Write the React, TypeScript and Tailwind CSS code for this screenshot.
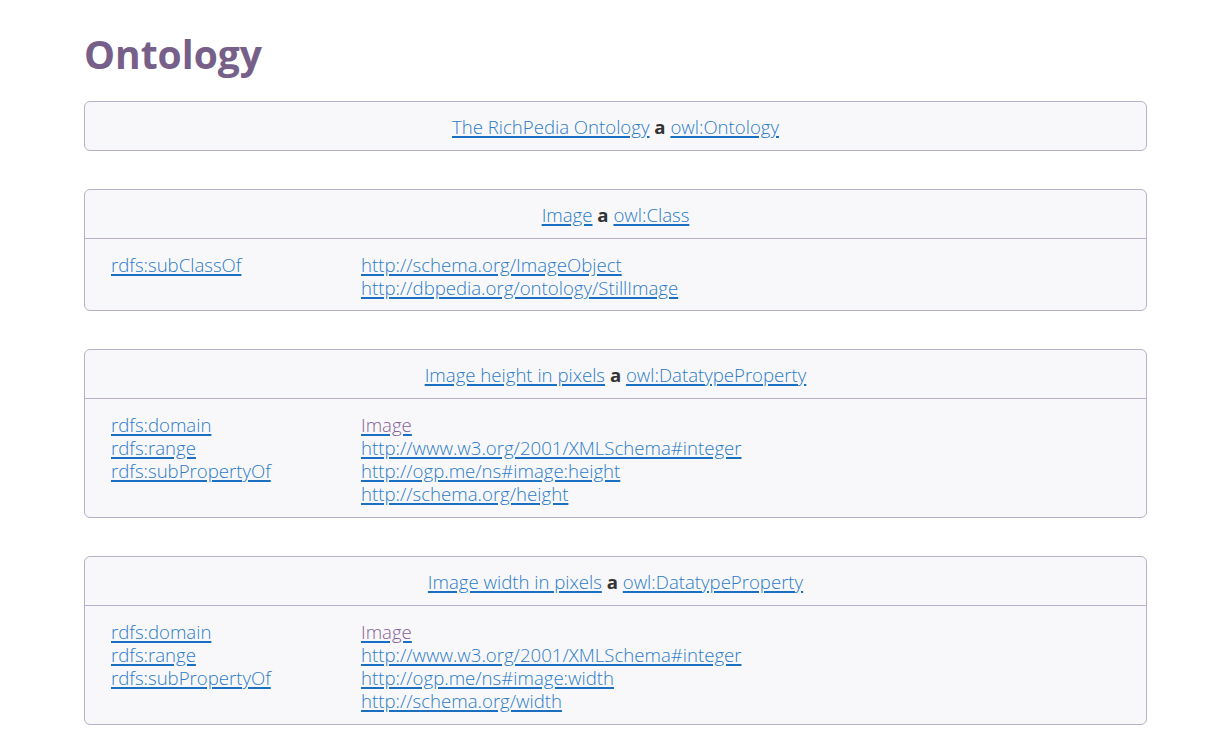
import React from "react";

type Card = { subject: string; type: string; rows: { label: string; values: { text: string; visited?: boolean }[] }[] };

const cards: Card[] = [
  { subject: "The RichPedia Ontology", type: "owl:Ontology", rows: [] },
  {
    subject: "Image",
    type: "owl:Class",
    rows: [
      {
        label: "rdfs:subClassOf",
        values: [{ text: "http://schema.org/ImageObject" }, { text: "http://dbpedia.org/ontology/StillImage" }],
      },
    ],
  },
  {
    subject: "Image height in pixels",
    type: "owl:DatatypeProperty",
    rows: [
      { label: "rdfs:domain", values: [{ text: "Image", visited: true }] },
      { label: "rdfs:range", values: [{ text: "http://www.w3.org/2001/XMLSchema#integer" }] },
      {
        label: "rdfs:subPropertyOf",
        values: [{ text: "http://ogp.me/ns#image:height" }, { text: "http://schema.org/height" }],
      },
    ],
  },
  {
    subject: "Image width in pixels",
    type: "owl:DatatypeProperty",
    rows: [
      { label: "rdfs:domain", values: [{ text: "Image", visited: true }] },
      { label: "rdfs:range", values: [{ text: "http://www.w3.org/2001/XMLSchema#integer" }] },
      {
        label: "rdfs:subPropertyOf",
        values: [{ text: "http://ogp.me/ns#image:width" }, { text: "http://schema.org/width" }],
      },
    ],
  },
];

function A({ children, visited }: { children: React.ReactNode; visited?: boolean }) {
  return (
    <a
      href="#"
      className={
        visited
          ? "text-[#85609a] underline decoration-[#1a6fc0] decoration-2 underline-offset-[2px]"
          : "text-[#2b7bc8] underline decoration-[#1a6fc0] decoration-2 underline-offset-[2px]"
      }
    >
      {children}
    </a>
  );
}

export default function App() {
  return (
    <div className="min-h-screen bg-white px-[84px] pt-[29px] pb-4 font-['Open_Sans',sans-serif] font-light text-[18.6px] leading-[23px]">
      <h1 className="text-[39px] leading-[50px] font-bold text-[#76608a] mb-[22px]">Ontology</h1>
      <div className="flex flex-col gap-[38px] w-[1063px]">
        {cards.map((c, i) => (
          <div key={i} className="border border-[#b9afc9] rounded-[6px] bg-[#f8f8fa]">
            <div className="h-[48px] flex items-center justify-center">
              <span>
                <A>{c.subject}</A> <b className="font-bold text-[#333]">a</b> <A>{c.type}</A>
              </span>
            </div>
            {c.rows.length > 0 && (
              <div
                className={
                  c.rows.length > 1
                    ? "border-t border-[#b9afc9] pl-[26px] pt-[14px] pb-[12px]"
                    : "border-t border-[#b9afc9] pl-[26px] pt-[14px] pb-[11px]"
                }
              >
                {c.rows.map((r, j) => (
                  <div key={j} className="flex">
                    <div className="w-[250px] shrink-0">
                      <A>{r.label}</A>
                    </div>
                    <div className="flex flex-col">
                      {r.values.map((v, k) => (
                        <div key={k}>
                          <A visited={v.visited}>{v.text}</A>
                        </div>
                      ))}
                    </div>
                  </div>
                ))}
              </div>
            )}
          </div>
        ))}
      </div>
    </div>
  );
}
